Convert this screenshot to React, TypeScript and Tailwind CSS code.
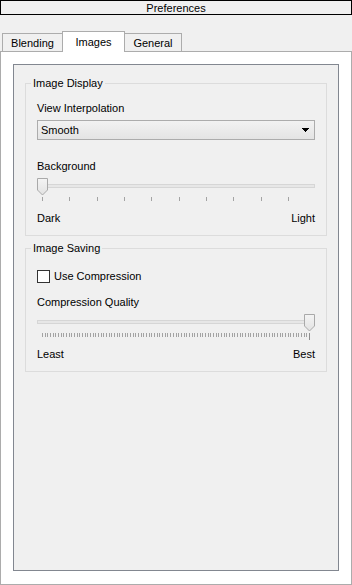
import type { ReactNode } from 'react';

const FONT = "font-['Liberation_Sans',Arial,sans-serif]";

interface TabProps {
  label: string;
  selected?: boolean;
  className?: string;
}

function Tab({ label, selected, className = '' }: TabProps) {
  if (selected) {
    return (
      <div
        className={`relative z-10 h-[21px] w-[63px] flex justify-center pt-[4px] bg-white border-l border-t border-r border-[#acacac] ${className}`}
      >
        {label}
      </div>
    );
  }
  return (
    <div
      className={`h-[18px] mb-[1px] flex justify-center pt-[3px] bg-[#f0f0f0] border-t border-[#acacac] ${className}`}
    >
      {label}
    </div>
  );
}

function Handle() {
  return (
    <svg width="11" height="18" viewBox="0 0 11 18" className="absolute top-0">
      <defs>
        <linearGradient id="hg" x1="0" y1="0" x2="0" y2="1">
          <stop offset="0" stopColor="#f4f4f4" />
          <stop offset="1" stopColor="#e2e2e2" />
        </linearGradient>
      </defs>
      <path d="M0.5 0.5 H10.5 V12 L5.5 17 L0.5 12 Z" fill="url(#hg)" stroke="#a9a9a9" />
    </svg>
  );
}

interface SliderProps {
  ticks: number;
  step: number;
  atEnd?: boolean;
  tickHeight: number;
}

function Slider({ ticks, step, atEnd, tickHeight }: SliderProps) {
  const marks = Array.from({ length: ticks }, (_, i) => i);
  return (
    <div className="relative h-[24px] w-full">
      {/* groove */}
      <div className="absolute left-0 right-0 top-[6px] h-[4px] bg-[#e7e7e7] border border-[#d6d6d6]" />
      {marks.map((i) => {
        const last = atEnd && i === ticks - 1;
        return (
          <div
            key={i}
            className={last ? 'absolute top-[19px] w-px bg-[#8f8f8f]' : 'absolute top-[19px] w-px bg-[#a3a3a3]'}
            style={{ left: Math.round(5 + i * step), height: last ? tickHeight + 3 : tickHeight }}
          />
        );
      })}
      <div className={atEnd ? 'absolute top-0 right-0 w-[11px] h-[18px]' : 'absolute top-0 left-0 w-[11px] h-[18px]'}>
        <Handle />
      </div>
    </div>
  );
}

function Group({ title, children, className = '' }: { title: string; children: ReactNode; className?: string }) {
  return (
    <fieldset className={`border border-[#dcdcdc] ${className}`}>
      <legend className="ml-[5px] px-[2px] leading-[13px]">{title}</legend>
      <div className="px-[11px] flex flex-col">{children}</div>
    </fieldset>
  );
}

function Ends({ left, right }: { left: string; right: string }) {
  return (
    <div className="flex justify-between">
      <span>{left}</span>
      <span>{right}</span>
    </div>
  );
}

export default function App() {
  return (
    <div
      className={`w-[352px] h-[585px] flex flex-col bg-[#f0f0f0] text-black text-[11px] leading-[13px] ${FONT}`}
    >
      <div className="h-[15px] shrink-0 border border-black flex items-start justify-center pt-[1px]">Preferences</div>

      <div className="mt-[16px] h-[21px] -mb-px flex items-end pl-[2px] shrink-0">
        <Tab label="Blending" className="w-[60px] border-l" />
        <Tab label="Images" selected />
        <Tab label="General" className="w-[57px] border-r" />
      </div>

      <div className="flex-1 flex flex-col border border-[#acacac] bg-white pt-[12px] px-[12px] pb-[13px]">
        <div className="flex-1 flex flex-col border border-[#828790] bg-[#f0f0f0] px-[11px] pt-[12px]">
          <Group title="Image Display" className="pb-[10px]">
            <div className="mt-[12px]">View Interpolation</div>
            <div className="mt-[5px] h-[20px] flex items-center justify-between border border-[#acacac] bg-gradient-to-b from-[#f2f2f2] to-[#e4e4e4] pl-[3px] pr-[5px]">
              <span className="pt-[1px]">Smooth</span>
              <svg width="7" height="4" viewBox="0 0 7 4" shapeRendering="crispEdges">
                <rect x="0" y="0" width="7" height="1" fill="#000" />
                <rect x="1" y="1" width="5" height="1" fill="#000" />
                <rect x="2" y="2" width="3" height="1" fill="#000" />
                <rect x="3" y="3" width="1" height="1" fill="#000" />
              </svg>
            </div>
            <div className="mt-[20px]">Background</div>
            <div className="mt-[5px]">
              <Slider ticks={10} step={27.33} tickHeight={4} />
            </div>
            <div className="mt-[10px]">
              <Ends left="Dark" right="Light" />
            </div>
          </Group>

          <Group title="Image Saving" className="mt-[6px] pb-[10px]">
            <div className="mt-[15px] flex items-center h-[13px]">
              <div className="w-[13px] h-[13px] border border-[#333] bg-white" />
              <span className="ml-[4px]">Use Compression</span>
            </div>
            <div className="mt-[13px]">Compression Quality</div>
            <div className="mt-[5px]">
              <Slider ticks={101} step={2.67} tickHeight={4} atEnd />
            </div>
            <div className="mt-[10px]">
              <Ends left="Least" right="Best" />
            </div>
          </Group>
        </div>
      </div>
    </div>
  );
}
